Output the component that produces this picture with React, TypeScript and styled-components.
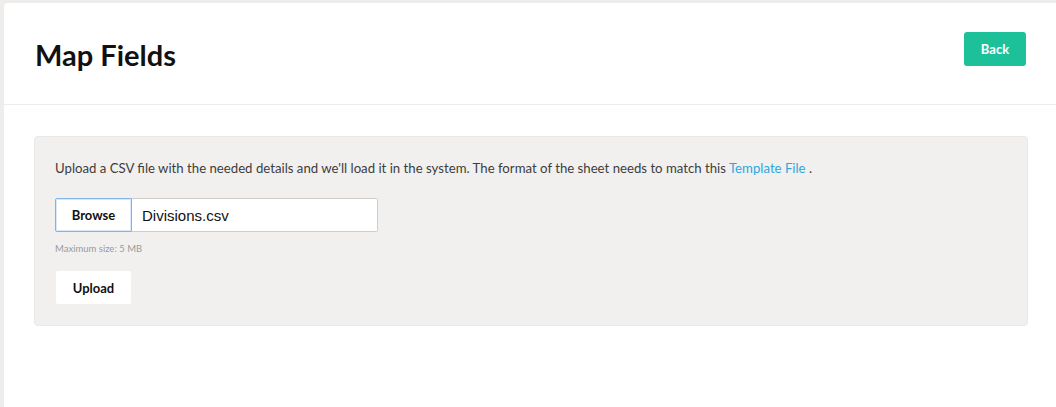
import styled, { createGlobalStyle } from "styled-components";

const GlobalStyle = createGlobalStyle`
  html, body {
    margin: 0;
    padding: 0;
    background: #eeedeb;
    font-family: Lato, "Open Sans", sans-serif;
    color: #3d3d3d;
  }
`;

const Page = styled.div`
  margin: 3px 0 0 4px;
  min-height: 404px;
  background: #ffffff;
  border-top-left-radius: 4px;
`;

const Header = styled.header`
  display: flex;
  align-items: center;
  justify-content: space-between;
  height: 102px;
  padding: 0 30px 0 31px;
  border-bottom: 1px solid #ececec;
  box-sizing: border-box;
`;

const Title = styled.h1`
  margin: 0;
  padding-top: 2px;
  font-size: 29px;
  font-weight: 700;
  color: #111;
`;

const BackButton = styled.button`
  width: 62px;
  height: 34px;
  margin-top: -10px;
  border: none;
  border-radius: 3px;
  background: #1dc199;
  color: #fff;
  font-family: inherit;
  font-size: 13px;
  font-weight: 700;
  cursor: pointer;
`;

const Content = styled.main`
  padding: 31px 28px 0 30px;
`;

const Card = styled.section`
  background: #f1f0ef;
  border: 1px solid #e9e8e6;
  border-radius: 4px;
  padding: 21px 20px 21px;
`;

const Intro = styled.p`
  margin: 0;
  font-size: 13.2px;
  line-height: 20px;
`;

const Link = styled.a`
  color: #2ca8e0;
  text-decoration: none;
`;

const FileRow = styled.div`
  display: flex;
  width: 323px;
  height: 34px;
  margin-top: 20px;
`;

const BrowseButton = styled.button`
  width: 77px;
  height: 100%;
  border: 1px solid #7fb6ea;
  box-shadow: inset 0 0 0 1px #d6e8fa;
  border-radius: 2px 0 0 2px;
  background: #fff;
  font-family: inherit;
  font-size: 13px;
  font-weight: 700;
  color: #111;
`;

const FileName = styled.div`
  flex: 1;
  display: flex;
  align-items: center;
  padding-left: 10px;
  border: 1px solid #cfcecc;
  border-left: none;
  border-radius: 0 2px 2px 0;
  background: #fff;
  font-family: "Liberation Sans", Arial, sans-serif;
  font-size: 15px;
  color: #111;
`;

const Hint = styled.div`
  margin-top: 11px;
  font-size: 9.5px;
  color: #9a9a9a;
`;

const UploadButton = styled.button`
  display: block;
  width: 75px;
  height: 33px;
  margin-top: 17px;
  margin-left: 1px;
  border: none;
  border-radius: 2px;
  background: #fff;
  font-family: inherit;
  font-size: 13px;
  font-weight: 700;
  color: #111;
`;

export default function App() {
  return (
    <>
      <GlobalStyle />
      <Page>
        <Header>
          <Title>Map Fields</Title>
          <BackButton>Back</BackButton>
        </Header>
        <Content>
          <Card>
            <Intro>
              Upload a CSV file with the needed details and we'll load it in the system. The format of the sheet
              needs to match this <Link href="#">Template File</Link> .
            </Intro>
            <FileRow>
              <BrowseButton>Browse</BrowseButton>
              <FileName>Divisions.csv</FileName>
            </FileRow>
            <Hint>Maximum size: 5 MB</Hint>
            <UploadButton>Upload</UploadButton>
          </Card>
        </Content>
      </Page>
    </>
  );
}
